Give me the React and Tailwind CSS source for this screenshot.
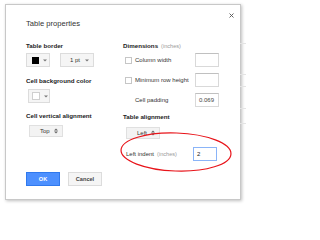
import React from 'react';

const font = { fontFamily: '"Liberation Sans", Arial, sans-serif' };

function Caret() {
  return (
    <svg width="4" height="3" viewBox="0 0 4 3" className="shrink-0">
      <path d="M0 0.5h4L2 2.5z" fill="#777" />
    </svg>
  );
}

function UpDown() {
  return (
    <svg width="4" height="6" viewBox="0 0 4 6" className="shrink-0">
      <path d="M0 2.5h4L2 0.5z M0 3.5h4L2 5.5z" fill="#666" />
    </svg>
  );
}

function Checkbox() {
  return <div className="h-[7px] w-[7px] border border-[#c6c6c6] bg-white" />;
}

function NumInput({ value, active }) {
  return (
    <div
      className={
        'flex h-[14px] w-[24px] items-center border px-[3px] text-[6px] ' +
        (active ? 'border-[#8ab4f8] text-[#222]' : 'border-[#d9d9d9] border-t-[#c0c0c0] text-[#444]')
      }
    >
      {value}
    </div>
  );
}

export default function App() {
  return (
    <div className="relative h-[205px] w-[246px] overflow-hidden bg-white" style={font}>
      {/* faint page lines behind the dialog */}
      <div className="absolute right-0 top-[43px] h-px w-[6px] bg-[#e4e4e4]" />
      <div className="absolute right-0 top-[74px] h-px w-[6px] bg-[#e4e4e4]" />
      <div className="absolute right-0 top-[86px] h-px w-[6px] bg-[#e4e4e4]" />
      <div className="absolute right-0 top-[108px] h-px w-[6px] bg-[#e4e4e4]" />
      <div className="absolute right-0 top-[123px] h-px w-[6px] bg-[#e4e4e4]" />

      <div className="pl-[5px] pt-[4px]">
        <div className="flex h-[196px] w-[236px] flex-col border border-[#c8c8c8] bg-white pl-[20px] pt-[14px] shadow-[1px_1px_3px_rgba(0,0,0,0.25)]">
          {/* title */}
          <div className="flex h-[10px] items-center pr-[6px]">
            <span className="text-[7.6px] leading-none text-[#333]">Table properties</span>
            <svg width="5" height="5" viewBox="0 0 5 5" className="ml-auto -mt-[18px]">
              <path d="M0.5 0.5l4 4M4.5 0.5l-4 4" stroke="#555" strokeWidth="0.9" />
            </svg>
          </div>

          <div className="mt-[13px] flex">
            {/* left column */}
            <div className="flex w-[97px] flex-col">
              <div className="h-[8px] text-[6.2px] font-bold leading-[8px] text-[#222]">Table border</div>
              <div className="mt-[3px] flex gap-[10px]">
                <div className="flex h-[14px] w-[24px] items-center gap-[4px] border border-[#dcdcdc] bg-[#f5f5f5] pl-[5px]">
                  <div className="h-[7px] w-[7px] bg-black" />
                  <Caret />
                </div>
                <div className="flex h-[14px] w-[34px] items-center border border-[#dcdcdc] bg-[#f5f5f5] pl-[9px] pr-[4px] text-[6px] text-[#333]">
                  <span>1 pt</span>
                  <span className="ml-auto"><Caret /></span>
                </div>
              </div>
              <div className="mt-[10px] h-[8px] text-[6.2px] font-bold leading-[8px] text-[#222]">Cell background color</div>
              <div className="ml-[2px] mt-[4px] flex h-[14px] w-[22px] items-center gap-[4px] border border-[#dcdcdc] bg-[#f5f5f5] pl-[3px]">
                <div className="h-[8px] w-[8px] border border-[#cfcfcf] bg-white" />
                <Caret />
              </div>
              <div className="mt-[9px] h-[8px] text-[6.2px] font-bold leading-[8px] text-[#222]">Cell vertical alignment</div>
              <div className="ml-[3px] mt-[5px] flex h-[12px] w-[34px] items-center border border-[#e0e0e0] bg-[#f3f3f3] pl-[10px] pr-[4px] text-[6px] text-[#333]">
                <span>Top</span>
                <span className="ml-auto"><UpDown /></span>
              </div>
            </div>

            {/* right column */}
            <div className="flex w-[96px] flex-col">
              <div className="h-[8px] text-[6.2px] leading-[8px] text-[#222]">
                <span className="font-bold">Dimensions</span>
                <span className="ml-[3px] text-[5.6px] text-[#999]">(inches)</span>
              </div>
              <div className="mt-[3px] flex h-[14px] items-center">
                <div className="ml-[2px] mt-[1px]"><Checkbox /></div>
                <span className="ml-[3px] text-[6px] text-[#333]">Column width</span>
                <span className="ml-auto"><NumInput value="" /></span>
              </div>
              <div className="mt-[6px] flex h-[14px] items-center">
                <div className="ml-[2px] mt-[1px]"><Checkbox /></div>
                <span className="ml-[3px] text-[6px] text-[#333]">Minimum row height</span>
                <span className="ml-auto"><NumInput value="" /></span>
              </div>
              <div className="mt-[6px] flex h-[14px] items-center">
                <span className="ml-[12px] text-[6px] text-[#333]">Cell padding</span>
                <span className="ml-auto"><NumInput value="0.069" /></span>
              </div>
              <div className="mt-[6px] h-[8px] text-[6.2px] font-bold leading-[8px] text-[#222]">Table alignment</div>
              <div className="ml-[3px] mt-[6px] flex h-[12px] w-[34px] items-center border border-[#e0e0e0] bg-[#f3f3f3] pl-[10px] pr-[4px] text-[6px] text-[#333]">
                <span>Left</span>
                <span className="ml-auto"><UpDown /></span>
              </div>
              <div className="mt-[8px] flex h-[14px] items-center pr-[2px]">
                <span className="ml-[3px] text-[6px] text-[#333]">Left indent</span>
                <span className="ml-[3px] text-[5.6px] text-[#999]">(inches)</span>
                <span className="ml-auto"><NumInput value="2" active /></span>
              </div>
            </div>
          </div>

          {/* buttons */}
          <div className="mt-[11px] flex gap-[8px]">
            <div className="flex h-[14px] w-[34px] items-center justify-center border border-[#3079ed] bg-[#4d90fe] text-[5.6px] font-bold text-white">
              OK
            </div>
            <div className="flex h-[14px] w-[34px] items-center justify-center border border-[#dcdcdc] bg-[#f5f5f5] text-[5.6px] font-bold text-[#444]">
              Cancel
            </div>
          </div>
        </div>
      </div>

      {/* red annotation ellipse */}
      <svg className="absolute left-0 top-0" width="246" height="205" viewBox="0 0 246 205">
        <ellipse cx="176" cy="152" rx="55" ry="19" fill="none" stroke="#e8141a" strokeWidth="1.2" transform="rotate(2 176 152)" />
      </svg>
    </div>
  );
}
